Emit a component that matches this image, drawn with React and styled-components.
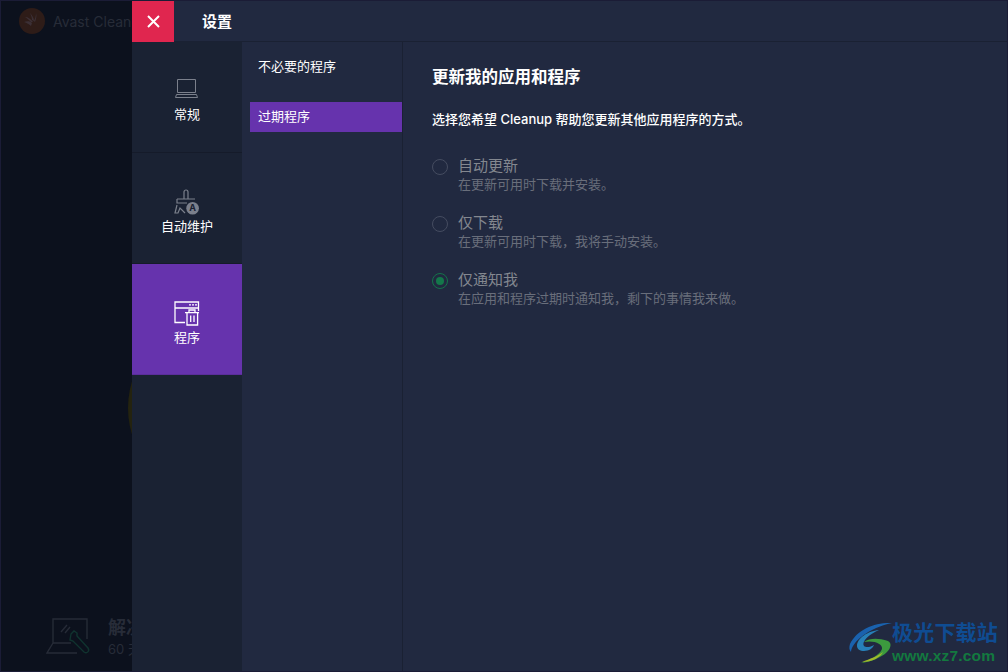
import styled, { createGlobalStyle } from "styled-components";

const Global = createGlobalStyle`
  html, body {
    margin: 0;
    padding: 0;
    background: #0c111d;
  }
  body {
    font-family: "Inter", "Noto Sans CJK SC", sans-serif;
  }
`;

const Window = styled.div`
  position: relative;
  width: 1008px;
  height: 672px;
  box-sizing: border-box;
  border: 1px solid #1b1c36;
  background: #0c111d;
  overflow: hidden;
`;

const Backdrop = styled.div`
  height: 100%;
  display: flex;
  flex-direction: column;
  justify-content: space-between;
`;

const BackTop = styled.div`
  display: flex;
  align-items: center;
  gap: 8px;
  padding: 7px 0 0 18px;
  color: #272c38;
  font-size: 14px;
`;

const BackBottom = styled.div`
  display: flex;
  align-items: center;
  gap: 12px;
  padding: 0 0 13px 45px;
`;

const BackText = styled.div`
  display: flex;
  flex-direction: column;
  color: #272c38;
`;

const BackTitle = styled.span`
  font-size: 18px;
  font-weight: 700;
  line-height: 24px;
`;

const BackSub = styled.span`
  font-size: 13px;
  line-height: 18px;
`;

const Dial = styled.div`
  position: absolute;
  left: 127px;
  top: 317px;
  width: 180px;
  height: 180px;
  border-radius: 50%;
  background: #24230f;
`;

const Panel = styled.div`
  position: absolute;
  left: 131px;
  top: 0;
  right: 0;
  bottom: 0;
  display: flex;
  flex-direction: column;
  background: #212940;
`;

const TitleBar = styled.div`
  height: 41px;
  flex: none;
  box-sizing: border-box;
  display: flex;
  align-items: flex-start;
  border-bottom: 1px solid #1a2133;
`;

const Close = styled.div`
  width: 42px;
  height: 41px;
  flex: none;
  background: #e0264f;
  display: flex;
  align-items: center;
  justify-content: center;
`;

const Heading = styled.div`
  margin-left: 28px;
  color: #fff;
  font-size: 15px;
  font-weight: 700;
  line-height: 41px;
`;

const Body = styled.div`
  flex: 1;
  display: flex;
  min-height: 0;
`;

const Rail = styled.div`
  width: 110px;
  flex: none;
  background: #1a2233;
`;

const RailItem = styled.div`
  height: 111px;
  box-sizing: border-box;
  display: flex;
  flex-direction: column;
  align-items: center;
  gap: ${(p) => p.$gap}px;
  padding-top: 36px;
  color: #fff;
  font-size: 13px;
  line-height: 18px;
  background: ${(p) => (p.$active ? "#6633ad" : "transparent")};
  border-bottom: 1px solid ${(p) => (p.$active ? "#5b2e9b" : "#151b2a")};
`;

const SubNav = styled.div`
  width: 161px;
  flex: none;
  box-sizing: border-box;
  padding: 9px 0 0 8px;
  border-right: 1px solid #1a2133;
`;

const SubItem = styled.div`
  height: 30px;
  box-sizing: border-box;
  display: flex;
  align-items: center;
  padding: 0 0 ${(p) => (p.$active ? 3 : 1)}px 8px;
  color: #fff;
  font-size: 13px;
  background: ${(p) => (p.$active ? "#6633ad" : "transparent")};
  margin-bottom: ${(p) => (p.$active ? 0 : "21px")};
`;

const Content = styled.div`
  flex: 1;
  padding: 23px 0 0 29px;
`;

const Title = styled.h1`
  margin: 0;
  color: #fff;
  font-size: 16.5px;
  font-weight: 700;
  line-height: 24px;
`;

const Lead = styled.p`
  margin: 21px 0 29px;
  color: #fff;
  font-size: 13px;
  font-weight: 500;
  line-height: 18px;
`;

const Options = styled.div`
  display: flex;
  flex-direction: column;
  gap: 21px;
`;

const Option = styled.div`
  display: flex;
  gap: 10px;
`;

const Radio = styled.span`
  width: 16px;
  height: 16px;
  flex: none;
  margin-top: 2px;
  box-sizing: border-box;
  border-radius: 50%;
  border: 1px solid ${(p) => (p.$on ? "#14734a" : "#454c60")};
  display: flex;
  align-items: center;
  justify-content: center;
  &::after {
    content: "";
    display: ${(p) => (p.$on ? "block" : "none")};
    width: 8px;
    height: 8px;
    border-radius: 50%;
    background: #14774a;
  }
`;

const OptionText = styled.div`
  display: flex;
  flex-direction: column;
`;

const OptionLabel = styled.span`
  color: #83878f;
  font-size: 15px;
  line-height: 18px;
`;

const OptionDesc = styled.span`
  color: #696e7b;
  font-size: 13px;
  line-height: 18px;
`;

const Watermark = styled.div`
  position: absolute;
  right: 9px;
  bottom: 7px;
  display: flex;
  align-items: flex-end;
`;

const MarkText = styled.div`
  display: flex;
  flex-direction: column;
  align-items: flex-start;
  gap: 2px;
  margin-left: -2px;
`;

const MarkName = styled.span`
  color: #0f4c92;
  font-size: 21px;
  font-weight: 700;
  line-height: 26px;
  letter-spacing: 0.2px;
`;

const MarkUrl = styled.span`
  color: #13793f;
  font-family: "Liberation Sans", sans-serif;
  font-size: 15.5px;
  font-weight: 700;
  line-height: 16px;
  letter-spacing: 0.2px;
`;

const options = [
  { label: "自动更新", desc: "在更新可用时下载并安装。" },
  { label: "仅下载", desc: "在更新可用时下载，我将手动安装。" },
  { label: "仅通知我", desc: "在应用和程序过期时通知我，剩下的事情我来做。", on: true },
];

const AvastLogo = () => (
  <svg width="26" height="26" viewBox="0 0 26 26">
    <circle cx="13" cy="13" r="13" fill="#2e1c18" />
    <path d="M5 14c3-1 6-1 8 1l-1 3c-2-2-4-3-7-4zM6 9c3 0 6 2 8 5l-2 0c-2-2-4-4-6-5zM11 5c2 2 4 5 4 8l-2-1c0-2-1-5-2-7zM17 5c1 3 0 6-1 9l-1-1c1-2 2-5 2-8z" fill="#3c3036" />
  </svg>
);

const RepairIcon = () => (
  <svg width="50" height="38" viewBox="0 0 50 38" fill="none" strokeWidth="1.4">
    <path d="M7 25V1h34v20M7 25h18M7 25L1 35h30" stroke="#262b37" />
    <path d="M15 14l6-7M19 15l5-6" stroke="#262b37" />
    <path d="M25 16l3-3 3 2 0 3 11 12c2 3-1 6-4 4L27 23l-3-1z" stroke="#10332f" />
  </svg>
);

const LaptopIcon = () => (
  <svg width="24" height="22" viewBox="0 0 24 22" fill="none" stroke="#7b808c" strokeWidth="1">
    <path d="M2.5 1.5h18v13h-18z" />
    <path d="M1.5 16.5h20M0.5 19.5h22" strokeWidth="1.2" />
    <path d="M1.5 16.5L0.5 19.5M21.5 16.5L22.5 19.5" />
  </svg>
);

const BrushIcon = () => (
  <svg width="26" height="26" viewBox="0 0 26 26" fill="none" stroke="#7b808c" strokeWidth="1.2">
    <path d="M10 10V3a2 2 0 0 1 4 0v7" />
    <path d="M3 10h18M3 10v4h10" />
    <path d="M3 16L1 24h3l2-5 5 5" />
    <circle cx="18.6" cy="19.3" r="6.3" fill="#7b808c" stroke="none" />
    <text x="18.6" y="22.4" textAnchor="middle" fontSize="9" fontWeight="700" fill="#1a2233" stroke="none" fontFamily="Inter, sans-serif">A</text>
  </svg>
);

const ProgramIcon = () => (
  <svg width="26" height="26" viewBox="0 0 26 26" fill="none" stroke="#fff" strokeWidth="1.3">
    <path d="M11 22.5H1V2h23.5v9M1 8h23.5" />
    <path d="M15 4.8h2M18 4.8h2M21 4.8h2" strokeWidth="1.2" />
    <path d="M11 12.7h14M15 12.7V10h6v2.7M13 12.7V25h10.6V12.7M16.7 15.5v6.5M20 15.5v6.5" />
  </svg>
);

const Swirl = () => (
  <svg width="46" height="42" viewBox="0 0 46 42">
    <path d="M44 1C28 0 9 7 2 22c-1 3-1 6 1 8C4 20 20 6 44 1z" fill="#1a62ae" />
    <path d="M31 8C20 9 9 16 9 24c0 3 3 5 7 5 5 0 9-3 10-6-3 2-8 3-10 1-3-4 5-12 15-16z" fill="#2780b8" />
    <path d="M16 20c6-4 14-4 24-1 4 2 3 7-1 11-6 6-17 10-26 11 8-3 19-8 21-14 1-5-8-9-18-7z" fill="#3c9a3e" />
    <path d="M14 40c8-3 16-6 21-10-2 5-11 10-21 10z" fill="#a4b82a" />
  </svg>
);

export default function App() {
  return (
    <>
      <Global />
      <Window>
        <Backdrop>
          <BackTop>
            <AvastLogo />
            <span>Avast Cleanup</span>
          </BackTop>
          <BackBottom>
            <RepairIcon />
            <BackText>
              <BackTitle>解决问题</BackTitle>
              <BackSub>60 天</BackSub>
            </BackText>
          </BackBottom>
        </Backdrop>
        <Dial />
        <Panel>
          <TitleBar>
            <Close>
              <svg width="13" height="13" viewBox="0 0 13 13" stroke="#fff" strokeWidth="2">
                <path d="M1 1l11 11M12 1L1 12" />
              </svg>
            </Close>
            <Heading>设置</Heading>
          </TitleBar>
          <Body>
            <Rail>
              <RailItem $gap={5}>
                <LaptopIcon />
                常规
              </RailItem>
              <RailItem $gap={2}>
                <BrushIcon />
                自动维护
              </RailItem>
              <RailItem $gap={2} $active>
                <ProgramIcon />
                程序
              </RailItem>
            </Rail>
            <SubNav>
              <SubItem>不必要的程序</SubItem>
              <SubItem $active>过期程序</SubItem>
            </SubNav>
            <Content>
              <Title>更新我的应用和程序</Title>
              <Lead>选择您希望 Cleanup 帮助您更新其他应用程序的方式。</Lead>
              <Options>
                {options.map((o) => (
                  <Option key={o.label}>
                    <Radio $on={o.on} />
                    <OptionText>
                      <OptionLabel>{o.label}</OptionLabel>
                      <OptionDesc>{o.desc}</OptionDesc>
                    </OptionText>
                  </Option>
                ))}
              </Options>
            </Content>
          </Body>
        </Panel>
        <Watermark>
          <Swirl />
          <MarkText>
            <MarkName>极光下载站</MarkName>
            <MarkUrl>www.xz7.com</MarkUrl>
          </MarkText>
        </Watermark>
      </Window>
    </>
  );
}
